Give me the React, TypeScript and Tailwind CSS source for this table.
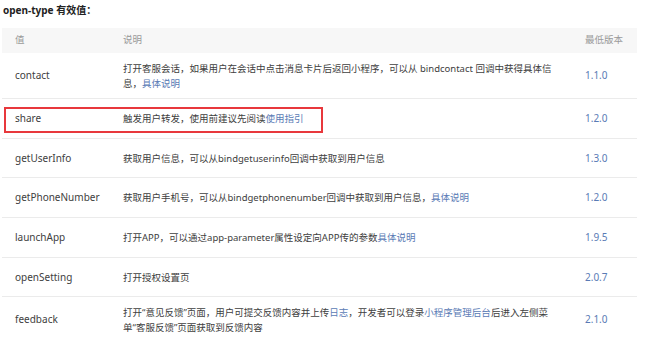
import React from 'react';

interface Row {
  value: string;
  desc: React.ReactNode;
  version: string;
  height: string;
  marked?: boolean;
}

const Link: React.FC<{ children: React.ReactNode }> = ({ children }) => (
  <a className="text-[#5a7bb5] no-underline">{children}</a>
);

const rows: Row[] = [
  {
    value: 'contact',
    desc: (
      <>
        打开客服会话，如果用户在会话中点击消息卡片后返回小程序，可以从 bindcontact 回调中获得具体信
        <br />
        息，<Link>具体说明</Link>
      </>
    ),
    version: '1.1.0',
    height: 'h-[46px]',
  },
  {
    value: 'share',
    desc: (
      <>
        触发用户转发，使用前建议先阅读<Link>使用指引</Link>
      </>
    ),
    version: '1.2.0',
    height: 'h-[40px]',
    marked: true,
  },
  {
    value: 'getUserInfo',
    desc: '获取用户信息，可以从bindgetuserinfo回调中获取到用户信息',
    version: '1.3.0',
    height: 'h-[39px]',
  },
  {
    value: 'getPhoneNumber',
    desc: (
      <>
        获取用户手机号，可以从bindgetphonenumber回调中获取到用户信息，<Link>具体说明</Link>
      </>
    ),
    version: '1.2.0',
    height: 'h-[40px]',
  },
  {
    value: 'launchApp',
    desc: (
      <>
        打开APP，可以通过app-parameter属性设定向APP传的参数<Link>具体说明</Link>
      </>
    ),
    version: '1.9.5',
    height: 'h-[40px]',
  },
  {
    value: 'openSetting',
    desc: '打开授权设置页',
    version: '2.0.7',
    height: 'h-[39px]',
  },
  {
    value: 'feedback',
    desc: (
      <>
        打开“意见反馈”页面，用户可提交反馈内容并上传<Link>日志</Link>，开发者可以登录<Link>小程序管理后台</Link>后进入左侧菜
        <br />
        单“客服反馈”页面获取到反馈内容
      </>
    ),
    version: '2.1.0',
    height: 'h-[46px]',
  },
];

const App: React.FC = () => {
  return (
    <div className="w-[650px] h-[337px] overflow-hidden bg-white font-['Noto_Sans','Noto_Sans_CJK_SC',sans-serif] text-[10px] text-[#404040]">
      <div className="h-[20px] mb-[8px] pl-[3px] flex items-center text-[10px] font-bold text-[#222]">
        open-type 有效值：
      </div>
      <div className="ml-[2px] w-[635px]">
        <div className="grid grid-cols-[108px_462px_1fr] h-[25px] items-center bg-[#f7f7f7] text-[#9a9a9a] text-[9.5px]">
          <div className="pl-[13px]">值</div>
          <div className="pl-[13px]">说明</div>
          <div className="pl-[13px]">最低版本</div>
        </div>
        {rows.map(row => (
          <div
            key={row.value}
            className={`relative grid grid-cols-[108px_462px_1fr] items-center border-b border-[#ebebeb] leading-[15px] ${row.height}`}
          >
            <div className="pl-[13px]">{row.value}</div>
            <div className="pl-[13px] whitespace-nowrap text-[9.5px]">{row.desc}</div>
            <div className="pl-[13px] text-[#5a7bb5]">{row.version}</div>
            {row.marked && (
              <div className="absolute left-[2px] top-[8px] w-[319px] h-[26px] border-2 border-[#e8383c]"></div>
            )}
          </div>
        ))}
      </div>
    </div>
  );
};

export default App;
